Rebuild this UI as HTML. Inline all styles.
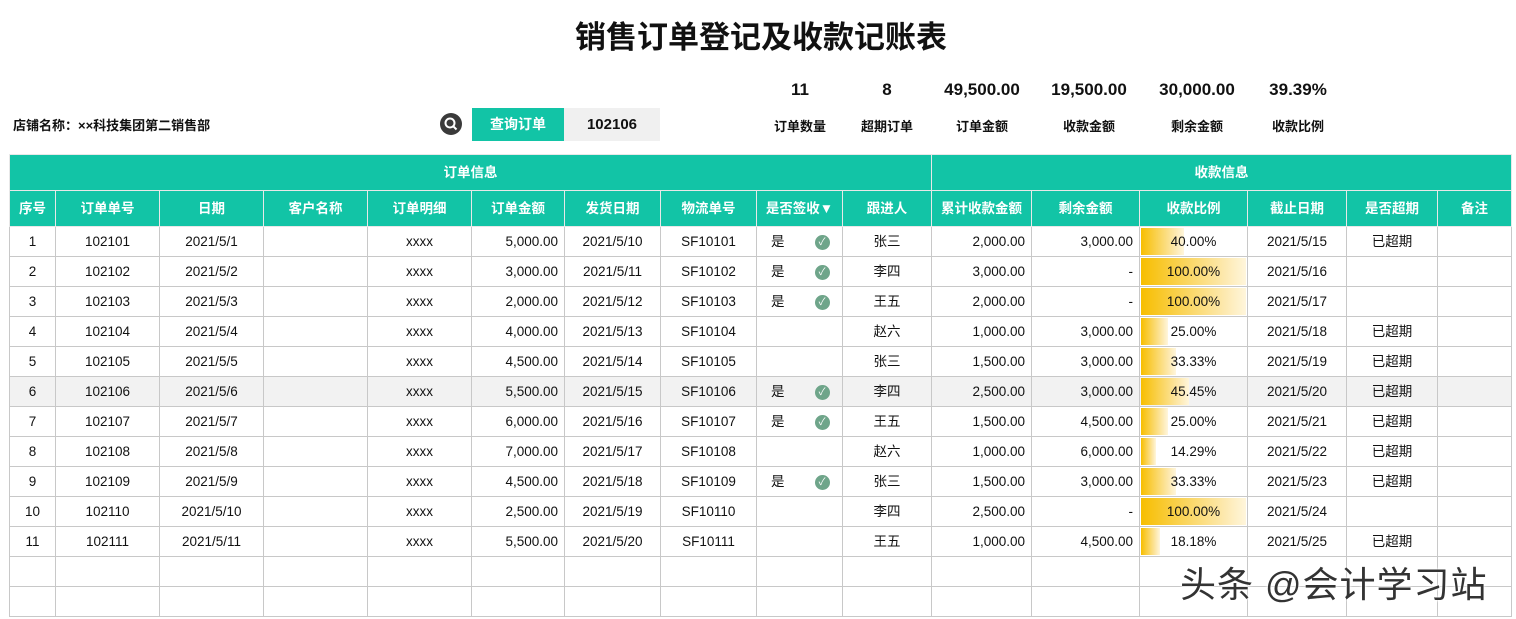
<!DOCTYPE html>
<html><head><meta charset="utf-8"><style>
body{margin:0;width:1516px;height:619px;background:#fff;font-family:"Liberation Sans","Noto Sans CJK SC",sans-serif;color:#111;position:relative;overflow:hidden}
.title{position:absolute;left:0;width:1522px;top:12px;text-align:center;font-size:31px;font-weight:bold}
.store{position:absolute;left:13px;top:115px;font-size:13px;font-weight:bold}
.sicon{position:absolute;left:440px;top:113px;width:22px;height:22px;border-radius:50%;background:#3a3a3a}
.btn{position:absolute;left:472px;top:108px;width:92px;height:33px;background:#12c4a6;color:#fff;font-size:14px;font-weight:bold;text-align:center;line-height:33px}
.box{position:absolute;left:564px;top:108px;width:96px;height:33px;background:#f0f0f0;font-size:15px;font-weight:bold;text-align:center;line-height:33px}
.st{position:absolute;text-align:center;width:110px}
.st b{display:block;font-size:17px;position:absolute;top:80px;width:110px}
.st span{display:block;font-size:13px;font-weight:bold;position:absolute;top:116px;width:110px}
table{position:absolute;left:9px;top:154px;border-collapse:collapse;table-layout:fixed;font-size:13.5px}
td{border:1px solid #c8c8c8;height:29px;padding:0;text-align:center;white-space:nowrap;overflow:hidden;line-height:29px}
tr.g td,tr.h td{background:#12c4a6;color:#fff;font-weight:bold;border-color:#e8e8e8;height:35px}
.r{text-align:right;padding-right:6px}
.sel td{background:#f2f2f2}
.ok{display:inline-block;width:15px;height:15px;border-radius:50%;background:#6fa58a;color:#fff;font-size:10px;line-height:15px;text-align:center;vertical-align:middle}
.yes{text-align:left;padding-left:14px}
.yes .ok{margin-left:30px}
.bar{position:relative;padding:0}
.bar i{position:absolute;left:1px;top:1px;bottom:1px;background:linear-gradient(90deg,#f7be00,#fde9b0 80%,#fff6dc)}
.bar span{position:relative}
.wm{position:absolute;left:1180px;top:556px;font-size:36px;letter-spacing:1px;color:#333;text-shadow:0 0 3px #fff,0 0 3px #fff}
</style></head><body>
<div class="title">销售订单登记及收款记账表</div>
<div class="store">店铺名称：××科技集团第二销售部</div>
<div class="sicon"><svg width="22" height="22"><circle cx="10" cy="10" r="4.5" fill="none" stroke="#fff" stroke-width="2"/><line x1="13" y1="13" x2="16.5" y2="16.5" stroke="#fff" stroke-width="2"/></svg></div>
<div class="btn">查询订单</div>
<div class="box">102106</div>
<div class="st" style="left:745px"><b>11</b><span>订单数量</span></div>
<div class="st" style="left:832px"><b>8</b><span>超期订单</span></div>
<div class="st" style="left:927px"><b>49,500.00</b><span>订单金额</span></div>
<div class="st" style="left:1034px"><b>19,500.00</b><span>收款金额</span></div>
<div class="st" style="left:1142px"><b>30,000.00</b><span>剩余金额</span></div>
<div class="st" style="left:1243px"><b>39.39%</b><span>收款比例</span></div>
<table>
<colgroup><col style="width:46px"><col style="width:104px"><col style="width:104px"><col style="width:104px"><col style="width:104px"><col style="width:93px"><col style="width:96px"><col style="width:96px"><col style="width:86px"><col style="width:89px"><col style="width:100px"><col style="width:108px"><col style="width:108px"><col style="width:99px"><col style="width:91px"><col style="width:74px"></colgroup>
<tr class="g"><td colspan="10">订单信息</td><td colspan="6">收款信息</td></tr>
<tr class="h"><td>序号</td><td>订单单号</td><td>日期</td><td>客户名称</td><td>订单明细</td><td>订单金额</td><td>发货日期</td><td>物流单号</td><td>是否签收▼</td><td>跟进人</td><td>累计收款金额</td><td>剩余金额</td><td>收款比例</td><td>截止日期</td><td>是否超期</td><td>备注</td></tr>
<tr><td>1</td><td>102101</td><td>2021/5/1</td><td></td><td>xxxx</td><td class="r">5,000.00</td><td>2021/5/10</td><td>SF10101</td><td class="yes">是<span class="ok">✓</span></td><td>张三</td><td class="r">2,000.00</td><td class="r">3,000.00</td><td class="bar"><i style="width:40%"></i><span>40.00%</span></td><td>2021/5/15</td><td>已超期</td><td></td></tr>
<tr><td>2</td><td>102102</td><td>2021/5/2</td><td></td><td>xxxx</td><td class="r">3,000.00</td><td>2021/5/11</td><td>SF10102</td><td class="yes">是<span class="ok">✓</span></td><td>李四</td><td class="r">3,000.00</td><td class="r">-</td><td class="bar"><i style="width:98%"></i><span>100.00%</span></td><td>2021/5/16</td><td></td><td></td></tr>
<tr><td>3</td><td>102103</td><td>2021/5/3</td><td></td><td>xxxx</td><td class="r">2,000.00</td><td>2021/5/12</td><td>SF10103</td><td class="yes">是<span class="ok">✓</span></td><td>王五</td><td class="r">2,000.00</td><td class="r">-</td><td class="bar"><i style="width:98%"></i><span>100.00%</span></td><td>2021/5/17</td><td></td><td></td></tr>
<tr><td>4</td><td>102104</td><td>2021/5/4</td><td></td><td>xxxx</td><td class="r">4,000.00</td><td>2021/5/13</td><td>SF10104</td><td></td><td>赵六</td><td class="r">1,000.00</td><td class="r">3,000.00</td><td class="bar"><i style="width:25%"></i><span>25.00%</span></td><td>2021/5/18</td><td>已超期</td><td></td></tr>
<tr><td>5</td><td>102105</td><td>2021/5/5</td><td></td><td>xxxx</td><td class="r">4,500.00</td><td>2021/5/14</td><td>SF10105</td><td></td><td>张三</td><td class="r">1,500.00</td><td class="r">3,000.00</td><td class="bar"><i style="width:33%"></i><span>33.33%</span></td><td>2021/5/19</td><td>已超期</td><td></td></tr>
<tr class="sel"><td>6</td><td>102106</td><td>2021/5/6</td><td></td><td>xxxx</td><td class="r">5,500.00</td><td>2021/5/15</td><td>SF10106</td><td class="yes">是<span class="ok">✓</span></td><td>李四</td><td class="r">2,500.00</td><td class="r">3,000.00</td><td class="bar"><i style="width:45%"></i><span>45.45%</span></td><td>2021/5/20</td><td>已超期</td><td></td></tr>
<tr><td>7</td><td>102107</td><td>2021/5/7</td><td></td><td>xxxx</td><td class="r">6,000.00</td><td>2021/5/16</td><td>SF10107</td><td class="yes">是<span class="ok">✓</span></td><td>王五</td><td class="r">1,500.00</td><td class="r">4,500.00</td><td class="bar"><i style="width:25%"></i><span>25.00%</span></td><td>2021/5/21</td><td>已超期</td><td></td></tr>
<tr><td>8</td><td>102108</td><td>2021/5/8</td><td></td><td>xxxx</td><td class="r">7,000.00</td><td>2021/5/17</td><td>SF10108</td><td></td><td>赵六</td><td class="r">1,000.00</td><td class="r">6,000.00</td><td class="bar"><i style="width:14%"></i><span>14.29%</span></td><td>2021/5/22</td><td>已超期</td><td></td></tr>
<tr><td>9</td><td>102109</td><td>2021/5/9</td><td></td><td>xxxx</td><td class="r">4,500.00</td><td>2021/5/18</td><td>SF10109</td><td class="yes">是<span class="ok">✓</span></td><td>张三</td><td class="r">1,500.00</td><td class="r">3,000.00</td><td class="bar"><i style="width:33%"></i><span>33.33%</span></td><td>2021/5/23</td><td>已超期</td><td></td></tr>
<tr><td>10</td><td>102110</td><td>2021/5/10</td><td></td><td>xxxx</td><td class="r">2,500.00</td><td>2021/5/19</td><td>SF10110</td><td></td><td>李四</td><td class="r">2,500.00</td><td class="r">-</td><td class="bar"><i style="width:98%"></i><span>100.00%</span></td><td>2021/5/24</td><td></td><td></td></tr>
<tr><td>11</td><td>102111</td><td>2021/5/11</td><td></td><td>xxxx</td><td class="r">5,500.00</td><td>2021/5/20</td><td>SF10111</td><td></td><td>王五</td><td class="r">1,000.00</td><td class="r">4,500.00</td><td class="bar"><i style="width:18%"></i><span>18.18%</span></td><td>2021/5/25</td><td>已超期</td><td></td></tr>
<tr><td></td><td></td><td></td><td></td><td></td><td></td><td></td><td></td><td></td><td></td><td></td><td></td><td></td><td></td><td></td><td></td></tr>
<tr><td></td><td></td><td></td><td></td><td></td><td></td><td></td><td></td><td></td><td></td><td></td><td></td><td></td><td></td><td></td><td></td></tr>
</table>
<div class="wm">头条 @会计学习站</div>
</body></html>
